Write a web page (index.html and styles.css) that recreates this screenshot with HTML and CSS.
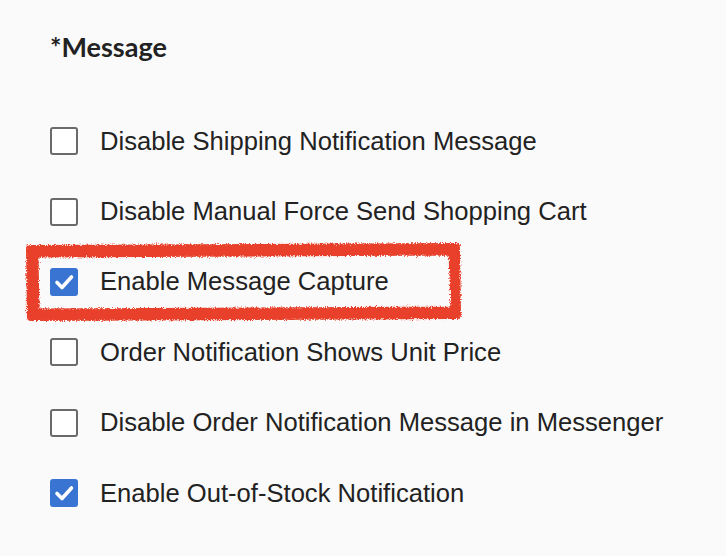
FILE: index.html
```html
<!DOCTYPE html>
<html lang="en">
<head>
<meta charset="utf-8">
<title>Message settings</title>
<link rel="stylesheet" href="styles.css">
</head>
<body>
<section class="panel">
  <h2 class="panel-title">*Message</h2>
  <ul class="options">
    <li class="option">
      <span class="box"></span>
      <span class="label">Disable Shipping Notification Message</span>
    </li>
    <li class="option">
      <span class="box"></span>
      <span class="label">Disable Manual Force Send Shopping Cart</span>
    </li>
    <li class="option">
      <span class="box checked">
        <svg viewBox="0 0 28 28" class="tick"><path d="M7 14.5 L12 19.5 L21.5 9"/></svg>
      </span>
      <span class="label">Enable Message Capture</span>
      <svg class="marker" viewBox="0 0 440 80" preserveAspectRatio="none">
        <defs>
          <filter id="rough" x="-5%" y="-10%" width="110%" height="120%">
            <feTurbulence type="fractalNoise" baseFrequency="0.8" numOctaves="3" seed="5" result="noise"/>
            <feDisplacementMap in="SourceGraphic" in2="noise" scale="5" xChannelSelector="R" yChannelSelector="G"/>
          </filter>
        </defs>
        <g filter="url(#rough)" fill="none" stroke="#e8412a" stroke-linejoin="round">
          <path d="M6 7 L432 5 L433 73 L7 75 Z" stroke-width="8"/>
          <path d="M11 12 L428 10 L430 68 L12 70 Z" stroke-width="7"/>
        </g>
      </svg>
    </li>
    <li class="option">
      <span class="box"></span>
      <span class="label">Order Notification Shows Unit Price</span>
    </li>
    <li class="option">
      <span class="box"></span>
      <span class="label">Disable Order Notification Message in Messenger</span>
    </li>
    <li class="option">
      <span class="box checked">
        <svg viewBox="0 0 28 28" class="tick"><path d="M7 14.5 L12 19.5 L21.5 9"/></svg>
      </span>
      <span class="label">Enable Out-of-Stock Notification</span>
    </li>
  </ul>
</section>
</body>
</html>
```
FILE: styles.css
```css
html, body {
  margin: 0;
  padding: 0;
  background: #fafafa;
}

.panel {
  padding: 28px 0 0 50px;
  color: #222222;
}

.panel-title {
  margin: 0 0 40px 0;
  font-family: "Lato", "Liberation Sans", sans-serif;
  font-weight: 700;
  font-size: 27px;
  line-height: 38px;
  color: #222222;
}

.options {
  list-style: none;
  margin: 0;
  padding: 0;
  display: flex;
  flex-direction: column;
}

.option {
  position: relative;
  display: flex;
  align-items: center;
  gap: 22px;
  height: 70.4px;
}

.box {
  flex: none;
  box-sizing: border-box;
  width: 28px;
  height: 28px;
  border: 2.5px solid #6a6a6a;
  border-radius: 3px;
  background: #ffffff;
  display: flex;
}

.box.checked {
  border: none;
  background: #3a74d2;
}

.tick {
  width: 28px;
  height: 28px;
}

.tick path {
  fill: none;
  stroke: #ffffff;
  stroke-width: 3.6;
  stroke-linecap: round;
  stroke-linejoin: round;
}

.label {
  font-family: "Liberation Sans", Arial, sans-serif;
  font-size: 25.6px;
  color: #222222;
  white-space: nowrap;
}

/* hand-drawn highlight around an option */
.marker {
  position: absolute;
  left: -26px;
  top: -5px;
  width: 440px;
  height: 80px;
  pointer-events: none;
}
```
